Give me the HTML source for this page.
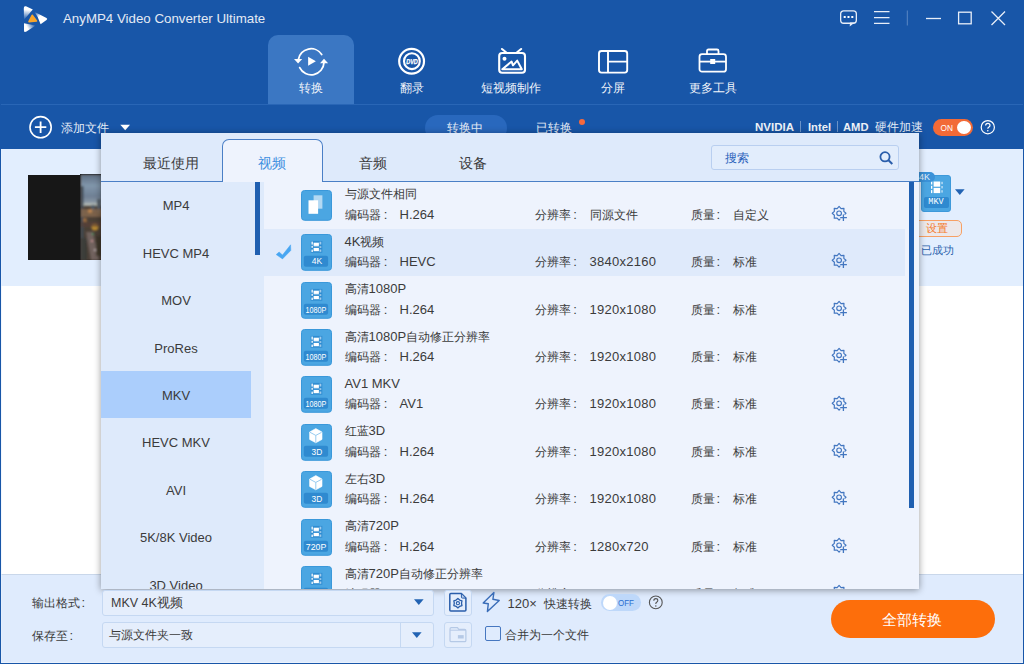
<!DOCTYPE html>
<html><head><meta charset="utf-8">
<style>
*{margin:0;padding:0;box-sizing:border-box}
html,body{width:1024px;height:664px;overflow:hidden}
body{position:relative;background:#1856a8;font-family:"Liberation Sans",sans-serif;color:#3b3b3b}
.a{position:absolute}
.w{color:#fff}
.navl{position:absolute;top:80px;font-size:12.3px;line-height:16px;color:#f0f4fa;white-space:nowrap;text-align:center;width:80px}
/* panel */
#panel{position:absolute;left:101px;top:133px;width:818px;height:456px;background:#eef3fd;box-shadow:0 1px 7px rgba(0,0,0,.4);overflow:hidden}
.row{position:absolute;left:163px;width:641px;height:47.4px}
.row.sel{background:#dfeafb}
.ic{position:absolute}

.t1{position:absolute;left:243.5px;font-size:13px;line-height:17px;color:#3b3b3b;white-space:nowrap}
.t1 i,.t2 i{font-style:normal;font-size:12.2px}
.t2{position:absolute;font-size:13px;line-height:17px;color:#3b3b3b;white-space:nowrap}
.t2 .lab{display:inline-block;width:54px}
.gear{position:absolute;left:727px}
.li{position:absolute;left:0;width:150px;height:47.4px;line-height:47.4px;padding-top:1.3px;text-align:center;font-size:13px;color:#3b3b3b}
.li.lsel{background:#abcefc}
</style></head>
<body>
<svg width="0" height="0" style="position:absolute">
<defs>
<mask id="gm" maskUnits="userSpaceOnUse" x="828" y="203" width="22" height="21"><rect x="828" y="203" width="22" height="21" fill="#fff"/><path d="M843.4 214.4 V220.9 M840.2 217.6 H846.9" stroke="#000" stroke-width="3.6"/></mask>
<g id="gear" fill="none" stroke="#4276c0" stroke-width="1.15" stroke-linejoin="round">
<path d="M839.10 206.40 L841.05 208.59 L843.98 208.42 L843.81 211.35 L846.00 213.30 L843.81 215.25 L843.98 218.18 L841.05 218.01 L839.10 220.20 L837.15 218.01 L834.22 218.18 L834.39 215.25 L832.20 213.30 L834.39 211.35 L834.22 208.42 L837.15 208.59 Z" mask="url(#gm)"/>
<circle cx="839.1" cy="213.3" r="2.35"/>
<path d="M843.4 214.4 V220.9 M840.2 217.6 H846.9" stroke-width="1.3"/>
</g>
</defs>
</svg>

<!-- title bar -->
<svg class="a" style="left:20px;top:3px" width="30" height="32" viewBox="20 3 30 32">
<defs>
<linearGradient id="lg1" gradientUnits="userSpaceOnUse" x1="26" y1="7" x2="25" y2="20"><stop offset="0.2" stop-color="#fff"/><stop offset="1" stop-color="#fff" stop-opacity="0"/></linearGradient>
<linearGradient id="lg2" gradientUnits="userSpaceOnUse" x1="34.5" y1="12" x2="43" y2="21"><stop offset="0" stop-color="#fff" stop-opacity="0"/><stop offset="0.55" stop-color="#fff"/></linearGradient>
<linearGradient id="lg3" gradientUnits="userSpaceOnUse" x1="25" y1="31" x2="35.5" y2="25"><stop offset="0.3" stop-color="#fff"/><stop offset="1" stop-color="#fff" stop-opacity="0"/></linearGradient>
</defs>
<path d="M23.8 8 Q23.8 5.6 26 6.3 L32.8 9.6 L24 19.8 Z" fill="url(#lg1)"/>
<path d="M34.3 11.8 L46.5 18 Q48 19 46.5 20 L40.6 24.3 Q38.5 17 34.3 11.8 Z" fill="url(#lg2)"/>
<path d="M24 23.2 L35.6 25.6 L26.5 31.6 Q24 32.8 24 30.5 Z" fill="url(#lg3)"/>
<path d="M32.2 15.3 L36.5 21 L29 21.6 Z" fill="#f8a52b" stroke="#f8a52b" stroke-width="1.6" stroke-linejoin="round"/>
</svg>
<div class="a w" style="left:63px;top:10px;font-size:13.3px;line-height:17px;color:#e4eaf4;white-space:nowrap">AnyMP4 Video Converter Ultimate</div>

<!-- window controls -->
<svg class="a" style="left:838px;top:8px" width="172" height="22" viewBox="0 0 172 22">
<g fill="none" stroke="#e8eef8" stroke-width="1.3">
<rect x="2.65" y="2.85" width="15.7" height="12.4" rx="3"/>
<path d="M36 3.7 H51.5 M36 9.6 H51.5 M36 15.4 H51.5"/>
<path d="M88 10.5 H103"/>
<rect x="120.6" y="4.2" width="12.6" height="11.6"/>
<path d="M153.5 3.5 L167 17 M167 3.5 L153.5 17"/>
</g>
<path d="M69.3 2.5 V17.5" stroke="#5b87c4" stroke-width="1"/>
<rect x="5.7" y="8" width="2" height="2" fill="#fff"/><rect x="9.5" y="8" width="2" height="2" fill="#fff"/><rect x="13.3" y="8" width="2" height="2" fill="#fff"/>
<path d="M12 14.6 L16.8 14.6 L11.7 18.4 Z" fill="#e8eef8"/>
</svg>

<!-- nav -->
<div class="a" style="left:268px;top:35px;width:86px;height:70px;background:#3b77c3;border-radius:10px 10px 0 0"></div>
<div class="a" style="left:1px;top:104px;width:1022px;height:1px;background:#2966b6"></div>

<svg class="a" style="left:290px;top:44px" width="40" height="34" viewBox="290 44 40 34">
<g fill="none" stroke="#fff" stroke-width="1.8" stroke-linecap="round">
<path d="M298.4 59.5 A12.8 12.8 0 0 1 321.7 54.5"/>
<path d="M324 62.5 A12.8 12.8 0 0 1 299.7 67.6"/>
</g>
<path d="M294 59.1 L302.2 59.1 L298.1 63.4 Z" fill="#fff"/>
<path d="M320 63.2 L328.1 63.2 L324 58.8 Z" fill="#fff"/>
<path d="M308.1 56.8 L315.9 61.3 L308.1 65.8 Z" fill="#fff"/>
</svg>
<div class="navl" style="left:271px">转换</div>

<svg class="a" style="left:394px;top:44px" width="36" height="34" viewBox="394 44 36 34">
<circle cx="411.6" cy="61.2" r="12.4" fill="none" stroke="#fff" stroke-width="2.2"/>
<circle cx="411.9" cy="61.2" r="7.9" fill="none" stroke="#fff" stroke-width="2.1"/>
<text x="412" y="63.7" text-anchor="middle" font-family="Liberation Sans" font-weight="bold" font-style="italic" font-size="6.6" fill="#fff" stroke="#fff" stroke-width="0.25" textLength="11.6" lengthAdjust="spacingAndGlyphs">DVD</text>
</svg>
<div class="navl" style="left:371.5px">翻录</div>

<svg class="a" style="left:494px;top:44px" width="36" height="34" viewBox="494 44 36 34">
<g fill="none" stroke="#fff" stroke-width="2.1" stroke-linecap="round" stroke-linejoin="round">
<rect x="499.2" y="53" width="25.8" height="19.7" rx="3"/>
<path d="M502 49 L506.3 52.5 M521.1 49 L516.8 52.5"/>
<path d="M502.3 69.2 L511.6 61.6 L513 65.3 L517.2 60.6 L521.8 69.2 Z" stroke-width="2"/>
</g>
<circle cx="504.5" cy="58.8" r="2" fill="#fff"/>
</svg>
<div class="navl" style="left:471px">短视频制作</div>

<svg class="a" style="left:596px;top:48px" width="34" height="27" viewBox="0 0 34 27">
<g fill="none" stroke="#fff" stroke-width="1.9">
<rect x="3" y="3" width="28.2" height="21.6" rx="2.5"/>
<path d="M12 3 V24.6 M12 13.6 H31.2"/>
</g>
</svg>
<div class="navl" style="left:572.5px">分屏</div>

<svg class="a" style="left:697px;top:47px" width="32" height="27" viewBox="0 0 32 27">
<g fill="none" stroke="#fff" stroke-width="1.8">
<rect x="2.5" y="7.2" width="26.5" height="17.5" rx="2.5"/>
<path d="M10 7 V4 Q10 2.5 11.5 2.5 H20 Q21.5 2.5 21.5 4 V7"/>
<path d="M2.5 14.6 H29"/>
</g>
<rect x="13.2" y="12" width="5" height="5" fill="#fff"/>
</svg>
<div class="navl" style="left:673px">更多工具</div>

<!-- toolbar -->
<svg class="a" style="left:28px;top:115px" width="26" height="25" viewBox="0 0 26 25">
<circle cx="12.6" cy="12.2" r="10.6" fill="none" stroke="#fff" stroke-width="1.6"/>
<path d="M12.6 6.5 V17.9 M6.9 12.2 H18.3" stroke="#fff" stroke-width="1.8"/>
</svg>
<div class="a" style="left:60.5px;top:119.8px;font-size:12px;line-height:16px;color:#e4ebf6">添加文件</div>
<svg class="a" style="left:120px;top:124px" width="11" height="7" viewBox="0 0 11 7"><path d="M0.3 0.8 H10 L5.2 6.3 Z" fill="#fff"/></svg>

<div class="a" style="left:424.5px;top:115px;width:82.5px;height:26px;border-radius:13px;background:#2968bd"></div>
<div class="a" style="left:447px;top:119.8px;font-size:12px;line-height:16px;color:#e4ebf6">转换中</div>
<div class="a" style="left:536px;top:119.8px;font-size:12px;line-height:16px;color:#e4ebf6">已转换</div>
<div class="a" style="left:579px;top:119px;width:6.2px;height:6.2px;border-radius:50%;background:#f7693c"></div>

<div class="a" style="left:755px;top:120px;font-size:11.5px;line-height:14px;font-weight:bold;color:#eef2f8;white-space:nowrap">NVIDIA</div>
<div class="a" style="left:800px;top:121px;width:1px;height:11px;background:#6b93c8"></div>
<div class="a" style="left:808px;top:120px;font-size:11.2px;line-height:14px;font-weight:bold;color:#eef2f8">Intel</div>
<div class="a" style="left:836.5px;top:121px;width:1px;height:11px;background:#6b93c8"></div>
<div class="a" style="left:843px;top:120px;font-size:11.2px;line-height:14px;font-weight:bold;color:#eef2f8">AMD</div>
<div class="a" style="left:875px;top:119.2px;font-size:12px;line-height:16px;color:#e4ebf6;white-space:nowrap">硬件加速</div>
<div class="a" style="left:932.5px;top:119px;width:40.5px;height:16.5px;border-radius:8.5px;background:#f26a37"></div>
<svg class="a" style="left:939px;top:121px" width="16" height="13" viewBox="0 0 16 13"><text x="1.6" y="9.8" font-family="Liberation Sans" font-size="9" fill="#fff" textLength="12.4" lengthAdjust="spacingAndGlyphs">ON</text></svg>
<div class="a" style="left:956.5px;top:120.5px;width:14px;height:13.5px;border-radius:50%;background:#fff"></div>
<svg class="a" style="left:980px;top:120px" width="16" height="15" viewBox="0 0 16 15">
<circle cx="7.8" cy="7.2" r="6.6" fill="none" stroke="#fff" stroke-width="1.2"/>
<path d="M5.6 5.6 Q5.6 3.4 7.8 3.4 Q10 3.4 10 5.3 Q10 6.5 8.7 7.2 Q7.8 7.7 7.8 8.8" fill="none" stroke="#fff" stroke-width="1.2"/>
<circle cx="7.8" cy="10.8" r="0.8" fill="#fff"/>
</svg>

<!-- content -->
<div class="a" style="left:1px;top:149px;width:1022px;height:137px;background:#e2eefe"></div>
<div class="a" style="left:1px;top:286px;width:1022px;height:288px;background:#ffffff"></div>
<div class="a" style="left:1px;top:574px;width:1022px;height:89px;background:#dfebfd;border-top:1px solid #c9d7ea"></div><div class="a" style="left:1px;top:662px;width:1022px;height:1px;background:#eaf2fd"></div>

<!-- thumbnail -->
<div class="a" style="left:28px;top:174.5px;width:53px;height:85px;background:#171717"></div>
<svg class="a" style="left:80px;top:174px" width="22" height="86" viewBox="80 174 22 86">
<defs>
<linearGradient id="sky" x1="0" y1="0" x2="0" y2="1"><stop offset="0" stop-color="#5f6f82"/><stop offset="0.35" stop-color="#8196ab"/><stop offset="0.7" stop-color="#6f8094"/><stop offset="1" stop-color="#9aa6ae"/></linearGradient>
<filter id="bl" x="-20%" y="-20%" width="140%" height="140%"><feGaussianBlur stdDeviation="0.8"/></filter>
</defs>
<rect x="80" y="174" width="22" height="86" fill="#171717"/>
<rect x="80.8" y="174.8" width="21.2" height="85" fill="#4a3f36"/>
<g filter="url(#bl)">
<rect x="80.8" y="174.8" width="21.2" height="31" fill="url(#sky)"/>
<rect x="81" y="203" width="20" height="3" fill="#b8bdb5" opacity=".7"/>
<rect x="81" y="186" width="2.5" height="74" fill="#3f4a55"/>
<rect x="91" y="205" width="4" height="6" fill="#4d5a66"/>
<rect x="97" y="199" width="4" height="14" fill="#56606a"/>
<rect x="81" y="209" width="21" height="8" fill="#8a6a50" opacity=".8"/>
<circle cx="90" cy="211" r="2" fill="#d09050" opacity=".8"/>
<circle cx="85" cy="220" r="2" fill="#c08040" opacity=".7"/>
<circle cx="95" cy="227" r="3.5" fill="#d8a030" opacity=".8"/>
<rect x="81" y="222" width="21" height="5" fill="#5a3f35" opacity=".6"/>
<path d="M86 232 L93 232 L99 260 L91 260 Z" fill="#7a6a68" opacity=".8"/>
<circle cx="93" cy="234" r="1" fill="#3fa060"/>
<circle cx="92" cy="241" r="1" fill="#e0a0a0"/>
<circle cx="95" cy="250" r="1" fill="#d0c0c0"/>
<rect x="81" y="238" width="6" height="22" fill="#3a3c38" opacity=".8"/>
<rect x="96" y="236" width="6" height="20" fill="#3c3626" opacity=".8"/>
</g>
</svg>

<!-- right of video row -->
<div class="a" style="left:921px;top:174.5px;width:30px;height:37px;background:#4ba6e2;border:1px solid #3d99da;border-radius:3px"></div>
<svg style="position:absolute;left:930.5px;top:181px" width="12" height="13" viewBox="0 0 12 13">
<rect x="0" y="0.5" width="1.3" height="3" fill="#fff"/><rect x="0" y="4.8" width="1.3" height="3" fill="#fff"/><rect x="0" y="9.1" width="1.3" height="3" fill="#fff"/>
<rect x="2.6" y="0.5" width="6.6" height="5.2" fill="#fff"/><rect x="2.6" y="6.9" width="6.6" height="5.2" fill="#fff"/>
<rect x="10.4" y="0.8" width="1.3" height="2.4" fill="#fff" opacity=".7"/><rect x="10.4" y="5" width="1.3" height="2.4" fill="#fff" opacity=".7"/><rect x="10.4" y="9.2" width="1.3" height="2.4" fill="#fff" opacity=".7"/>
</svg>
<div class="a" style="left:923.5px;top:196.5px;width:25px;height:11px;background:#2f8ad0;border-radius:2px;color:#fff;font-size:8.5px;line-height:11px;text-align:center;font-family:'Liberation Mono',monospace">MKV</div>
<div class="a" style="left:913px;top:171.5px;width:22px;height:10px;background:#3b92d8;border-radius:0 5px 5px 0;color:#e4f1fb;font-size:9px;line-height:10px;padding-left:6px">4K</div>
<svg class="a" style="left:955px;top:189px" width="10" height="7" viewBox="0 0 10 7"><path d="M0 0.3 H9.6 L4.8 6 Z" fill="#2263b3"/></svg>
<div class="a" style="left:905px;top:220px;width:57px;height:17px;border:1px solid #f7a064;border-radius:5px;background:#ece8ea"></div>
<div class="a" style="left:925.5px;top:221.3px;font-size:10.5px;line-height:15px;color:#f47b2a">设置</div>
<div class="a" style="left:921px;top:242.5px;font-size:10.5px;line-height:15px;color:#2a62ad">已成功</div>

<!-- panel -->
<div id="panel">
  <div class="a" style="left:0;top:0;width:818px;height:48px;background:#deeafb"></div>
  <div class="a" style="left:0;top:48px;width:818px;height:1px;background:#4a7fc6"></div>
  <div class="a" style="left:121px;top:6px;width:101px;height:43px;background:#eef3fd;border:1px solid #4a7fc6;border-bottom:none;border-radius:7px 7px 0 0"></div>
  <div class="a" style="left:42px;top:20.5px;font-size:14px;line-height:19px;color:#3b3b3b">最近使用</div>
  <div class="a" style="left:157px;top:20.5px;font-size:14px;line-height:19px;color:#3d8fe0">视频</div>
  <div class="a" style="left:257.5px;top:20.5px;font-size:14px;line-height:19px;color:#3b3b3b">音频</div>
  <div class="a" style="left:358px;top:20.5px;font-size:14px;line-height:19px;color:#3b3b3b">设备</div>
  <div class="a" style="left:610px;top:12.3px;width:188px;height:24.5px;border:1px solid #b9cff0;border-radius:3px;background:#e2edfc"></div>
  <div class="a" style="left:624px;top:16.8px;font-size:12.4px;line-height:16px;color:#2a62bb">搜索</div>
  <svg class="a" style="left:778px;top:17.5px" width="15" height="14" viewBox="0 0 15 14">
  <circle cx="6" cy="5.8" r="4.6" fill="none" stroke="#2a5eab" stroke-width="1.8"/>
  <path d="M9.5 9.2 L13.3 13" stroke="#2a5eab" stroke-width="2"/>
  </svg>
  <div class="a" style="left:0;top:49px;width:163px;height:407px;background:#deeafb"></div>
  <div class="a" style="left:154px;top:49px;width:5px;height:73px;background:#1f5fb0"></div>
  <div class="a" style="left:808px;top:49px;width:5px;height:325.5px;background:#1f5fb0"></div>
  <div id="rows" class="a" style="left:0;top:-133px;width:818px;height:589px">
<div class="li" style="top:181.2px">MP4</div>
<div class="li" style="top:228.6px">HEVC MP4</div>
<div class="li" style="top:276.0px">MOV</div>
<div class="li" style="top:323.4px">ProRes</div>
<div class="li lsel" style="top:370.8px">MKV</div>
<div class="li" style="top:418.2px">HEVC MKV</div>
<div class="li" style="top:465.6px">AVI</div>
<div class="li" style="top:513.0px">5K/8K Video</div>
<div class="li" style="top:560.4px">3D Video</div>
<div class="row" style="top:181.2px"></div>
<svg class="ic" style="top:189.7px;left:200.4px" width="31" height="31" viewBox="0 0 31 31">
<rect x="0.5" y="0.5" width="30" height="29.8" rx="3" fill="#4ba6e2" stroke="#3a98da" stroke-width="1"/>
<rect x="12.6" y="5.3" width="8.8" height="13.4" fill="#b3d9f3"/>
<rect x="7.5" y="10.3" width="9.6" height="13.5" fill="#fff"/></svg>
<div class="t1" style="top:185.3px"><i>与源文件相同</i></div>
<div class="t2" style="top:205.7px;left:244px"><i>编码器</i></div><div class="t2 cl" style="top:205.7px;left:282.8px">:</div><div class="t2" style="top:205.7px;left:298.5px">H.264</div>
<div class="t2" style="top:205.7px;left:434px"><i>分辨率</i></div><div class="t2 cl" style="top:205.7px;left:472.2px">:</div><div class="t2" style="top:205.7px;left:488.5px;letter-spacing:0.28px"><i>同源文件</i></div>
<div class="t2" style="top:205.7px;left:590px"><i>质量</i></div><div class="t2 cl" style="top:205.7px;left:615.6px">:</div><div class="t2" style="top:205.7px;left:632.2px"><i>自定义</i></div>
<svg class="gear" style="top:203.0px" width="22" height="21" viewBox="828 203 22 21"><g fill="none" stroke="#4276c0" stroke-width="1.15" stroke-linejoin="round"><path d="M839.10 206.40 L841.05 208.59 L843.98 208.42 L843.81 211.35 L846.00 213.30 L843.81 215.25 L843.98 218.18 L841.05 218.01 L839.10 220.20 L837.15 218.01 L834.22 218.18 L834.39 215.25 L832.20 213.30 L834.39 211.35 L834.22 208.42 L837.15 208.59 Z" mask="url(#gm)"/><circle cx="839.1" cy="213.3" r="2.35"/><path d="M843.4 214.4 V220.9 M840.2 217.6 H846.9" stroke-width="1.3"/></g></svg>
<div class="row sel" style="top:228.6px"></div>
<svg class="ic" style="top:234.2px;left:200.4px" width="31" height="37" viewBox="0 0 31 37">
<rect x="0.5" y="0.5" width="30" height="35.8" rx="3" fill="#4ba6e2" stroke="#3a98da" stroke-width="1"/>
<rect x="9.7" y="6.9" width="11.6" height="11.8" fill="#2f8dd2"/>
<rect x="10.5" y="7.6" width="1.3" height="3" fill="#fff"/><rect x="10.5" y="11.8" width="1.3" height="2" fill="#fff"/><rect x="10.5" y="15.6" width="1.3" height="2.4" fill="#fff"/>
<rect x="12.6" y="8.7" width="5.3" height="3.2" fill="#fff"/><rect x="12.6" y="14" width="5.3" height="3.2" fill="#fff"/><rect x="12.6" y="12.1" width="5.3" height="1.1" fill="#fff" opacity=".35"/>
<rect x="18.5" y="7.7" width="1.8" height="2.8" fill="#fff" opacity=".55"/><rect x="18.5" y="12.2" width="1.8" height="1.7" fill="#fff" opacity=".55"/><rect x="18.5" y="15.5" width="1.8" height="2.3" fill="#fff" opacity=".55"/>
<rect x="2.8" y="21.8" width="24.3" height="11" rx="2" fill="#2f8ad0"/>
<text x="16" y="30.4" text-anchor="middle" font-family="Liberation Sans" font-size="8.8" fill="#fff" textLength="10.4" lengthAdjust="spacingAndGlyphs">4K</text></svg>
<svg style="position:absolute;left:171px;top:240.0px" width="24" height="24" viewBox="272 240 24 24"><path d="M276.2 254.6 L279.1 252 L282.5 255 L290.6 244.8 L290.8 250.4 L282.5 258.9 Z" fill="#48a6f2" stroke="#48a6f2" stroke-width="0.5" stroke-linejoin="round"/></svg>
<div class="t1" style="top:232.7px">4K<i>视频</i></div>
<div class="t2" style="top:253.1px;left:244px"><i>编码器</i></div><div class="t2 cl" style="top:253.1px;left:282.8px">:</div><div class="t2" style="top:253.1px;left:298.5px">HEVC</div>
<div class="t2" style="top:253.1px;left:434px"><i>分辨率</i></div><div class="t2 cl" style="top:253.1px;left:472.2px">:</div><div class="t2" style="top:253.1px;left:488.5px;letter-spacing:0.28px">3840x2160</div>
<div class="t2" style="top:253.1px;left:590px"><i>质量</i></div><div class="t2 cl" style="top:253.1px;left:615.6px">:</div><div class="t2" style="top:253.1px;left:632.2px"><i>标准</i></div>
<svg class="gear" style="top:250.4px" width="22" height="21" viewBox="828 203 22 21"><g fill="none" stroke="#4276c0" stroke-width="1.15" stroke-linejoin="round"><path d="M839.10 206.40 L841.05 208.59 L843.98 208.42 L843.81 211.35 L846.00 213.30 L843.81 215.25 L843.98 218.18 L841.05 218.01 L839.10 220.20 L837.15 218.01 L834.22 218.18 L834.39 215.25 L832.20 213.30 L834.39 211.35 L834.22 208.42 L837.15 208.59 Z" mask="url(#gm)"/><circle cx="839.1" cy="213.3" r="2.35"/><path d="M843.4 214.4 V220.9 M840.2 217.6 H846.9" stroke-width="1.3"/></g></svg>
<div class="row" style="top:276.0px"></div>
<svg class="ic" style="top:281.6px;left:200.4px" width="31" height="37" viewBox="0 0 31 37">
<rect x="0.5" y="0.5" width="30" height="35.8" rx="3" fill="#4ba6e2" stroke="#3a98da" stroke-width="1"/>
<rect x="9.7" y="6.9" width="11.6" height="11.8" fill="#2f8dd2"/>
<rect x="10.5" y="7.6" width="1.3" height="3" fill="#fff"/><rect x="10.5" y="11.8" width="1.3" height="2" fill="#fff"/><rect x="10.5" y="15.6" width="1.3" height="2.4" fill="#fff"/>
<rect x="12.6" y="8.7" width="5.3" height="3.2" fill="#fff"/><rect x="12.6" y="14" width="5.3" height="3.2" fill="#fff"/><rect x="12.6" y="12.1" width="5.3" height="1.1" fill="#fff" opacity=".35"/>
<rect x="18.5" y="7.7" width="1.8" height="2.8" fill="#fff" opacity=".55"/><rect x="18.5" y="12.2" width="1.8" height="1.7" fill="#fff" opacity=".55"/><rect x="18.5" y="15.5" width="1.8" height="2.3" fill="#fff" opacity=".55"/>
<rect x="2.8" y="21.8" width="24.3" height="11" rx="2" fill="#2f8ad0"/>
<text x="15" y="30.5" text-anchor="middle" font-family="Liberation Sans" font-size="9.5" fill="#fff" textLength="20.8" lengthAdjust="spacingAndGlyphs">1080P</text></svg>
<div class="t1" style="top:280.1px"><i>高清</i>1080P</div>
<div class="t2" style="top:300.5px;left:244px"><i>编码器</i></div><div class="t2 cl" style="top:300.5px;left:282.8px">:</div><div class="t2" style="top:300.5px;left:298.5px">H.264</div>
<div class="t2" style="top:300.5px;left:434px"><i>分辨率</i></div><div class="t2 cl" style="top:300.5px;left:472.2px">:</div><div class="t2" style="top:300.5px;left:488.5px;letter-spacing:0.28px">1920x1080</div>
<div class="t2" style="top:300.5px;left:590px"><i>质量</i></div><div class="t2 cl" style="top:300.5px;left:615.6px">:</div><div class="t2" style="top:300.5px;left:632.2px"><i>标准</i></div>
<svg class="gear" style="top:297.8px" width="22" height="21" viewBox="828 203 22 21"><g fill="none" stroke="#4276c0" stroke-width="1.15" stroke-linejoin="round"><path d="M839.10 206.40 L841.05 208.59 L843.98 208.42 L843.81 211.35 L846.00 213.30 L843.81 215.25 L843.98 218.18 L841.05 218.01 L839.10 220.20 L837.15 218.01 L834.22 218.18 L834.39 215.25 L832.20 213.30 L834.39 211.35 L834.22 208.42 L837.15 208.59 Z" mask="url(#gm)"/><circle cx="839.1" cy="213.3" r="2.35"/><path d="M843.4 214.4 V220.9 M840.2 217.6 H846.9" stroke-width="1.3"/></g></svg>
<div class="row" style="top:323.4px"></div>
<svg class="ic" style="top:329.0px;left:200.4px" width="31" height="37" viewBox="0 0 31 37">
<rect x="0.5" y="0.5" width="30" height="35.8" rx="3" fill="#4ba6e2" stroke="#3a98da" stroke-width="1"/>
<rect x="9.7" y="6.9" width="11.6" height="11.8" fill="#2f8dd2"/>
<rect x="10.5" y="7.6" width="1.3" height="3" fill="#fff"/><rect x="10.5" y="11.8" width="1.3" height="2" fill="#fff"/><rect x="10.5" y="15.6" width="1.3" height="2.4" fill="#fff"/>
<rect x="12.6" y="8.7" width="5.3" height="3.2" fill="#fff"/><rect x="12.6" y="14" width="5.3" height="3.2" fill="#fff"/><rect x="12.6" y="12.1" width="5.3" height="1.1" fill="#fff" opacity=".35"/>
<rect x="18.5" y="7.7" width="1.8" height="2.8" fill="#fff" opacity=".55"/><rect x="18.5" y="12.2" width="1.8" height="1.7" fill="#fff" opacity=".55"/><rect x="18.5" y="15.5" width="1.8" height="2.3" fill="#fff" opacity=".55"/>
<rect x="2.8" y="21.8" width="24.3" height="11" rx="2" fill="#2f8ad0"/>
<text x="15" y="30.5" text-anchor="middle" font-family="Liberation Sans" font-size="9.5" fill="#fff" textLength="20.8" lengthAdjust="spacingAndGlyphs">1080P</text></svg>
<div class="t1" style="top:327.5px"><i>高清</i>1080P<i>自动修正分辨率</i></div>
<div class="t2" style="top:347.9px;left:244px"><i>编码器</i></div><div class="t2 cl" style="top:347.9px;left:282.8px">:</div><div class="t2" style="top:347.9px;left:298.5px">H.264</div>
<div class="t2" style="top:347.9px;left:434px"><i>分辨率</i></div><div class="t2 cl" style="top:347.9px;left:472.2px">:</div><div class="t2" style="top:347.9px;left:488.5px;letter-spacing:0.28px">1920x1080</div>
<div class="t2" style="top:347.9px;left:590px"><i>质量</i></div><div class="t2 cl" style="top:347.9px;left:615.6px">:</div><div class="t2" style="top:347.9px;left:632.2px"><i>标准</i></div>
<svg class="gear" style="top:345.2px" width="22" height="21" viewBox="828 203 22 21"><g fill="none" stroke="#4276c0" stroke-width="1.15" stroke-linejoin="round"><path d="M839.10 206.40 L841.05 208.59 L843.98 208.42 L843.81 211.35 L846.00 213.30 L843.81 215.25 L843.98 218.18 L841.05 218.01 L839.10 220.20 L837.15 218.01 L834.22 218.18 L834.39 215.25 L832.20 213.30 L834.39 211.35 L834.22 208.42 L837.15 208.59 Z" mask="url(#gm)"/><circle cx="839.1" cy="213.3" r="2.35"/><path d="M843.4 214.4 V220.9 M840.2 217.6 H846.9" stroke-width="1.3"/></g></svg>
<div class="row" style="top:370.8px"></div>
<svg class="ic" style="top:376.4px;left:200.4px" width="31" height="37" viewBox="0 0 31 37">
<rect x="0.5" y="0.5" width="30" height="35.8" rx="3" fill="#4ba6e2" stroke="#3a98da" stroke-width="1"/>
<rect x="9.7" y="6.9" width="11.6" height="11.8" fill="#2f8dd2"/>
<rect x="10.5" y="7.6" width="1.3" height="3" fill="#fff"/><rect x="10.5" y="11.8" width="1.3" height="2" fill="#fff"/><rect x="10.5" y="15.6" width="1.3" height="2.4" fill="#fff"/>
<rect x="12.6" y="8.7" width="5.3" height="3.2" fill="#fff"/><rect x="12.6" y="14" width="5.3" height="3.2" fill="#fff"/><rect x="12.6" y="12.1" width="5.3" height="1.1" fill="#fff" opacity=".35"/>
<rect x="18.5" y="7.7" width="1.8" height="2.8" fill="#fff" opacity=".55"/><rect x="18.5" y="12.2" width="1.8" height="1.7" fill="#fff" opacity=".55"/><rect x="18.5" y="15.5" width="1.8" height="2.3" fill="#fff" opacity=".55"/>
<rect x="2.8" y="21.8" width="24.3" height="11" rx="2" fill="#2f8ad0"/>
<text x="15" y="30.5" text-anchor="middle" font-family="Liberation Sans" font-size="9.5" fill="#fff" textLength="20.8" lengthAdjust="spacingAndGlyphs">1080P</text></svg>
<div class="t1" style="top:374.9px">AV1 MKV</div>
<div class="t2" style="top:395.3px;left:244px"><i>编码器</i></div><div class="t2 cl" style="top:395.3px;left:282.8px">:</div><div class="t2" style="top:395.3px;left:298.5px">AV1</div>
<div class="t2" style="top:395.3px;left:434px"><i>分辨率</i></div><div class="t2 cl" style="top:395.3px;left:472.2px">:</div><div class="t2" style="top:395.3px;left:488.5px;letter-spacing:0.28px">1920x1080</div>
<div class="t2" style="top:395.3px;left:590px"><i>质量</i></div><div class="t2 cl" style="top:395.3px;left:615.6px">:</div><div class="t2" style="top:395.3px;left:632.2px"><i>标准</i></div>
<svg class="gear" style="top:392.6px" width="22" height="21" viewBox="828 203 22 21"><g fill="none" stroke="#4276c0" stroke-width="1.15" stroke-linejoin="round"><path d="M839.10 206.40 L841.05 208.59 L843.98 208.42 L843.81 211.35 L846.00 213.30 L843.81 215.25 L843.98 218.18 L841.05 218.01 L839.10 220.20 L837.15 218.01 L834.22 218.18 L834.39 215.25 L832.20 213.30 L834.39 211.35 L834.22 208.42 L837.15 208.59 Z" mask="url(#gm)"/><circle cx="839.1" cy="213.3" r="2.35"/><path d="M843.4 214.4 V220.9 M840.2 217.6 H846.9" stroke-width="1.3"/></g></svg>
<div class="row" style="top:418.2px"></div>
<svg class="ic" style="top:423.8px;left:200.4px" width="31" height="37" viewBox="0 0 31 37">
<rect x="0.5" y="0.5" width="30" height="35.8" rx="3" fill="#4ba6e2" stroke="#3a98da" stroke-width="1"/>
<path d="M14.8 4.6 L21 8 L21 15.4 L14.8 18.8 L8.6 15.4 L8.6 8 Z" fill="#fff" stroke="#fff" stroke-width="0.6" stroke-linejoin="round"/>
<path d="M9 8.3 L14.8 11.4 L20.6 8.3 M14.8 11.4 L14.8 18.6" stroke="#8cc6ee" stroke-width="0.9" fill="none"/>
<rect x="2.8" y="21.8" width="24.3" height="11" rx="2" fill="#2f8ad0"/>
<text x="15.9" y="30.6" text-anchor="middle" font-family="Liberation Sans" font-size="9.6" fill="#fff" textLength="10.7" lengthAdjust="spacingAndGlyphs">3D</text></svg>
<div class="t1" style="top:422.3px"><i>红蓝</i>3D</div>
<div class="t2" style="top:442.7px;left:244px"><i>编码器</i></div><div class="t2 cl" style="top:442.7px;left:282.8px">:</div><div class="t2" style="top:442.7px;left:298.5px">H.264</div>
<div class="t2" style="top:442.7px;left:434px"><i>分辨率</i></div><div class="t2 cl" style="top:442.7px;left:472.2px">:</div><div class="t2" style="top:442.7px;left:488.5px;letter-spacing:0.28px">1920x1080</div>
<div class="t2" style="top:442.7px;left:590px"><i>质量</i></div><div class="t2 cl" style="top:442.7px;left:615.6px">:</div><div class="t2" style="top:442.7px;left:632.2px"><i>标准</i></div>
<svg class="gear" style="top:440.0px" width="22" height="21" viewBox="828 203 22 21"><g fill="none" stroke="#4276c0" stroke-width="1.15" stroke-linejoin="round"><path d="M839.10 206.40 L841.05 208.59 L843.98 208.42 L843.81 211.35 L846.00 213.30 L843.81 215.25 L843.98 218.18 L841.05 218.01 L839.10 220.20 L837.15 218.01 L834.22 218.18 L834.39 215.25 L832.20 213.30 L834.39 211.35 L834.22 208.42 L837.15 208.59 Z" mask="url(#gm)"/><circle cx="839.1" cy="213.3" r="2.35"/><path d="M843.4 214.4 V220.9 M840.2 217.6 H846.9" stroke-width="1.3"/></g></svg>
<div class="row" style="top:465.6px"></div>
<svg class="ic" style="top:471.2px;left:200.4px" width="31" height="37" viewBox="0 0 31 37">
<rect x="0.5" y="0.5" width="30" height="35.8" rx="3" fill="#4ba6e2" stroke="#3a98da" stroke-width="1"/>
<path d="M14.8 4.6 L21 8 L21 15.4 L14.8 18.8 L8.6 15.4 L8.6 8 Z" fill="#fff" stroke="#fff" stroke-width="0.6" stroke-linejoin="round"/>
<path d="M9 8.3 L14.8 11.4 L20.6 8.3 M14.8 11.4 L14.8 18.6" stroke="#8cc6ee" stroke-width="0.9" fill="none"/>
<rect x="2.8" y="21.8" width="24.3" height="11" rx="2" fill="#2f8ad0"/>
<text x="15.9" y="30.6" text-anchor="middle" font-family="Liberation Sans" font-size="9.6" fill="#fff" textLength="10.7" lengthAdjust="spacingAndGlyphs">3D</text></svg>
<div class="t1" style="top:469.7px"><i>左右</i>3D</div>
<div class="t2" style="top:490.1px;left:244px"><i>编码器</i></div><div class="t2 cl" style="top:490.1px;left:282.8px">:</div><div class="t2" style="top:490.1px;left:298.5px">H.264</div>
<div class="t2" style="top:490.1px;left:434px"><i>分辨率</i></div><div class="t2 cl" style="top:490.1px;left:472.2px">:</div><div class="t2" style="top:490.1px;left:488.5px;letter-spacing:0.28px">1920x1080</div>
<div class="t2" style="top:490.1px;left:590px"><i>质量</i></div><div class="t2 cl" style="top:490.1px;left:615.6px">:</div><div class="t2" style="top:490.1px;left:632.2px"><i>标准</i></div>
<svg class="gear" style="top:487.4px" width="22" height="21" viewBox="828 203 22 21"><g fill="none" stroke="#4276c0" stroke-width="1.15" stroke-linejoin="round"><path d="M839.10 206.40 L841.05 208.59 L843.98 208.42 L843.81 211.35 L846.00 213.30 L843.81 215.25 L843.98 218.18 L841.05 218.01 L839.10 220.20 L837.15 218.01 L834.22 218.18 L834.39 215.25 L832.20 213.30 L834.39 211.35 L834.22 208.42 L837.15 208.59 Z" mask="url(#gm)"/><circle cx="839.1" cy="213.3" r="2.35"/><path d="M843.4 214.4 V220.9 M840.2 217.6 H846.9" stroke-width="1.3"/></g></svg>
<div class="row" style="top:513.0px"></div>
<svg class="ic" style="top:518.6px;left:200.4px" width="31" height="37" viewBox="0 0 31 37">
<rect x="0.5" y="0.5" width="30" height="35.8" rx="3" fill="#4ba6e2" stroke="#3a98da" stroke-width="1"/>
<rect x="9.7" y="6.9" width="11.6" height="11.8" fill="#2f8dd2"/>
<rect x="10.5" y="7.6" width="1.3" height="3" fill="#fff"/><rect x="10.5" y="11.8" width="1.3" height="2" fill="#fff"/><rect x="10.5" y="15.6" width="1.3" height="2.4" fill="#fff"/>
<rect x="12.6" y="8.7" width="5.3" height="3.2" fill="#fff"/><rect x="12.6" y="14" width="5.3" height="3.2" fill="#fff"/><rect x="12.6" y="12.1" width="5.3" height="1.1" fill="#fff" opacity=".35"/>
<rect x="18.5" y="7.7" width="1.8" height="2.8" fill="#fff" opacity=".55"/><rect x="18.5" y="12.2" width="1.8" height="1.7" fill="#fff" opacity=".55"/><rect x="18.5" y="15.5" width="1.8" height="2.3" fill="#fff" opacity=".55"/>
<rect x="2.8" y="21.8" width="24.3" height="11" rx="2" fill="#2f8ad0"/>
<text x="15" y="30.5" text-anchor="middle" font-family="Liberation Sans" font-size="9.5" fill="#fff" textLength="20.5" lengthAdjust="spacingAndGlyphs">720P</text></svg>
<div class="t1" style="top:517.1px"><i>高清</i>720P</div>
<div class="t2" style="top:537.5px;left:244px"><i>编码器</i></div><div class="t2 cl" style="top:537.5px;left:282.8px">:</div><div class="t2" style="top:537.5px;left:298.5px">H.264</div>
<div class="t2" style="top:537.5px;left:434px"><i>分辨率</i></div><div class="t2 cl" style="top:537.5px;left:472.2px">:</div><div class="t2" style="top:537.5px;left:488.5px;letter-spacing:0.28px">1280x720</div>
<div class="t2" style="top:537.5px;left:590px"><i>质量</i></div><div class="t2 cl" style="top:537.5px;left:615.6px">:</div><div class="t2" style="top:537.5px;left:632.2px"><i>标准</i></div>
<svg class="gear" style="top:534.8px" width="22" height="21" viewBox="828 203 22 21"><g fill="none" stroke="#4276c0" stroke-width="1.15" stroke-linejoin="round"><path d="M839.10 206.40 L841.05 208.59 L843.98 208.42 L843.81 211.35 L846.00 213.30 L843.81 215.25 L843.98 218.18 L841.05 218.01 L839.10 220.20 L837.15 218.01 L834.22 218.18 L834.39 215.25 L832.20 213.30 L834.39 211.35 L834.22 208.42 L837.15 208.59 Z" mask="url(#gm)"/><circle cx="839.1" cy="213.3" r="2.35"/><path d="M843.4 214.4 V220.9 M840.2 217.6 H846.9" stroke-width="1.3"/></g></svg>
<div class="row" style="top:560.4px"></div>
<svg class="ic" style="top:566.0px;left:200.4px" width="31" height="37" viewBox="0 0 31 37">
<rect x="0.5" y="0.5" width="30" height="35.8" rx="3" fill="#4ba6e2" stroke="#3a98da" stroke-width="1"/>
<rect x="9.7" y="6.9" width="11.6" height="11.8" fill="#2f8dd2"/>
<rect x="10.5" y="7.6" width="1.3" height="3" fill="#fff"/><rect x="10.5" y="11.8" width="1.3" height="2" fill="#fff"/><rect x="10.5" y="15.6" width="1.3" height="2.4" fill="#fff"/>
<rect x="12.6" y="8.7" width="5.3" height="3.2" fill="#fff"/><rect x="12.6" y="14" width="5.3" height="3.2" fill="#fff"/><rect x="12.6" y="12.1" width="5.3" height="1.1" fill="#fff" opacity=".35"/>
<rect x="18.5" y="7.7" width="1.8" height="2.8" fill="#fff" opacity=".55"/><rect x="18.5" y="12.2" width="1.8" height="1.7" fill="#fff" opacity=".55"/><rect x="18.5" y="15.5" width="1.8" height="2.3" fill="#fff" opacity=".55"/>
<rect x="2.8" y="21.8" width="24.3" height="11" rx="2" fill="#2f8ad0"/>
<text x="15" y="30.5" text-anchor="middle" font-family="Liberation Sans" font-size="9.5" fill="#fff" textLength="20.5" lengthAdjust="spacingAndGlyphs">720P</text></svg>
<div class="t1" style="top:564.5px"><i>高清</i>720P<i>自动修正分辨率</i></div>
<div class="t2" style="top:584.9px;left:244px"><i>编码器</i></div><div class="t2 cl" style="top:584.9px;left:282.8px">:</div><div class="t2" style="top:584.9px;left:298.5px">H.264</div>
<div class="t2" style="top:584.9px;left:434px"><i>分辨率</i></div><div class="t2 cl" style="top:584.9px;left:472.2px">:</div><div class="t2" style="top:584.9px;left:488.5px;letter-spacing:0.28px">1280x720</div>
<div class="t2" style="top:584.9px;left:590px"><i>质量</i></div><div class="t2 cl" style="top:584.9px;left:615.6px">:</div><div class="t2" style="top:584.9px;left:632.2px"><i>标准</i></div>
<svg class="gear" style="top:582.2px" width="22" height="21" viewBox="828 203 22 21"><g fill="none" stroke="#4276c0" stroke-width="1.15" stroke-linejoin="round"><path d="M839.10 206.40 L841.05 208.59 L843.98 208.42 L843.81 211.35 L846.00 213.30 L843.81 215.25 L843.98 218.18 L841.05 218.01 L839.10 220.20 L837.15 218.01 L834.22 218.18 L834.39 215.25 L832.20 213.30 L834.39 211.35 L834.22 208.42 L837.15 208.59 Z" mask="url(#gm)"/><circle cx="839.1" cy="213.3" r="2.35"/><path d="M843.4 214.4 V220.9 M840.2 217.6 H846.9" stroke-width="1.3"/></g></svg>
  </div>
</div>

<!-- bottom bar -->
<div class="a" style="left:32px;top:595px;font-size:12px;line-height:16px;color:#3b3b3b">输出格式</div><div class="a" style="left:81.5px;top:594px;font-size:13px;line-height:17px;color:#3b3b3b">:</div>
<div class="a" style="left:32px;top:627.5px;font-size:12px;line-height:16px;color:#3b3b3b">保存至</div><div class="a" style="left:69.5px;top:626.5px;font-size:13px;line-height:17px;color:#3b3b3b">:</div>
<div class="a" style="left:102px;top:590px;width:332px;height:25.5px;border:1px solid #c5d8f2;border-radius:3px;background:#e5eefc"></div>
<div class="a" style="left:111px;top:594.5px;font-size:12.5px;line-height:17px;color:#3b3b3b">MKV 4K视频</div>
<svg class="a" style="left:413.5px;top:599px" width="10" height="7" viewBox="0 0 10 7"><path d="M0 0.3 H9.6 L4.8 6 Z" fill="#2263b3"/></svg>
<div class="a" style="left:102px;top:622px;width:332px;height:25.5px;border:1px solid #c5d8f2;border-radius:3px;background:#e5eefc"></div>
<div class="a" style="left:400px;top:623px;width:1px;height:23.5px;background:#c5d8f2"></div>
<div class="a" style="left:109px;top:627px;font-size:12px;line-height:16px;color:#3b3b3b">与源文件夹一致</div>
<svg class="a" style="left:411.5px;top:631.5px" width="10" height="7" viewBox="0 0 10 7"><path d="M0 0.3 H9.6 L4.8 6 Z" fill="#2263b3"/></svg>

<div class="a" style="left:444px;top:589.5px;width:27.5px;height:26px;border:1px solid #c5d8f2;border-radius:3px;background:#e5eefc"></div>
<svg class="a" style="left:446px;top:590px" width="24" height="25" viewBox="446 590 24 25">
<path d="M450.8 593.6 H461.4 L465.9 598.1 V610.1 Q465.9 611.1 464.9 611.1 H450.8 Q449.8 611.1 449.8 610.1 V594.6 Q449.8 593.6 450.8 593.6 Z" fill="none" stroke="#2a5eab" stroke-width="1.5" stroke-linejoin="round"/>
<path d="M461.4 593.6 V597.1 Q461.4 598.1 462.4 598.1 H465.9 Z" fill="#b9cfee" stroke="#2a5eab" stroke-width="1" stroke-linejoin="round"/>
<path d="M457.90 598.50 L459.70 600.08 L461.97 600.85 L461.50 603.20 L461.97 605.55 L459.70 606.32 L457.90 607.90 L456.10 606.32 L453.83 605.55 L454.30 603.20 L453.83 600.85 L456.10 600.08 Z" fill="none" stroke="#2a5eab" stroke-width="1.3" stroke-linejoin="round"/>
<circle cx="457.9" cy="603.2" r="1.6" fill="none" stroke="#2a5eab" stroke-width="1.1"/>
</svg>
<div class="a" style="left:444px;top:621.5px;width:27.5px;height:26px;border:1px solid #c5d8f2;border-radius:3px;background:#e5eefc"></div>
<svg class="a" style="left:446px;top:624px" width="24" height="21" viewBox="446 624 24 21">
<path d="M450 629 Q450 627.7 451.3 627.7 H457.5 L458.7 629.4 H464.6 Q465.9 629.4 465.9 630.7 V640.4 Q465.9 641.7 464.6 641.7 H451.3 Q450 641.7 450 640.4 Z" fill="none" stroke="#b5c9e6" stroke-width="1.2" stroke-linejoin="round"/>
<path d="M450 630.2 H465.9" stroke="#b5c9e6" stroke-width="1"/>
<rect x="457.9" y="635.1" width="5.8" height="3.4" fill="#b5c9e6"/>
</svg>

<svg class="a" style="left:478px;top:588px" width="30" height="28" viewBox="478 588 30 28">
<path d="M493.9 592.6 L492.9 599.3 L499.2 600.5 L487.4 611.6 L488.3 603.7 L483.2 603 Z" fill="none" stroke="#3a6db8" stroke-width="1.4" stroke-linejoin="round"/>
</svg>
<div class="a" style="left:507.5px;top:594.5px;font-size:13px;line-height:17px;color:#3b3b3b;white-space:nowrap">120×</div><div class="a" style="left:543.6px;top:595.5px;font-size:12.2px;line-height:16px;color:#3b3b3b;white-space:nowrap">快速转换</div>
<div class="a" style="left:601.2px;top:594px;width:39.7px;height:17px;border-radius:8.5px;background:#bed8fa"></div>
<div class="a" style="left:602.5px;top:595.5px;width:14px;height:14px;border-radius:50%;background:#fff"></div>
<svg class="a" style="left:617px;top:596px" width="20" height="13" viewBox="0 0 20 13"><text x="1" y="10" font-family="Liberation Sans" font-size="9.2" fill="#2a6fd0" textLength="16" lengthAdjust="spacingAndGlyphs">OFF</text></svg>
<svg class="a" style="left:648px;top:595px" width="16" height="15" viewBox="0 0 16 15">
<circle cx="7.8" cy="7.4" r="6.4" fill="none" stroke="#555" stroke-width="1.1"/>
<path d="M5.8 5.8 Q5.8 3.6 7.8 3.6 Q9.8 3.6 9.8 5.5 Q9.8 6.6 8.6 7.3 Q7.8 7.8 7.8 8.9" fill="none" stroke="#555" stroke-width="1.1"/>
<circle cx="7.8" cy="10.9" r="0.75" fill="#555"/>
</svg>
<div class="a" style="left:485.2px;top:625.8px;width:15.6px;height:15.4px;border:1.2px solid #4677c0;border-radius:2px"></div>
<div class="a" style="left:505.2px;top:626.5px;font-size:12.2px;line-height:16px;color:#3b3b3b;white-space:nowrap">合并为一个文件</div>

<div class="a" style="left:831px;top:599.5px;width:164px;height:38px;border-radius:19px;background:#fd6e0b"></div>
<div class="a" style="left:882px;top:610px;font-size:15px;line-height:20px;color:#fff">全部转换</div>

<!-- window borders -->
<div class="a" style="left:0;top:105px;width:1px;height:559px;background:#1856a8"></div>
<div class="a" style="left:1023px;top:105px;width:1px;height:559px;background:#1856a8"></div>
<div class="a" style="left:0;top:663px;width:1024px;height:1px;background:#1856a8"></div><div class="a" style="left:1px;top:149px;width:1px;height:514px;background:#eaf2fd;opacity:.6"></div>
</body></html>
